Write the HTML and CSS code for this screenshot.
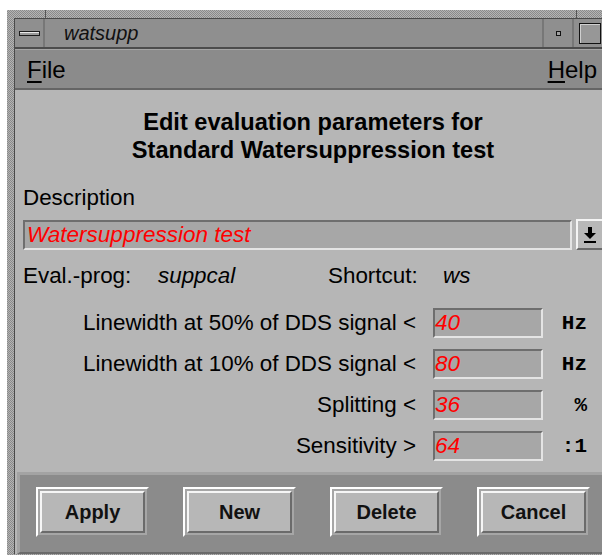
FILE: index.html
```html
<!DOCTYPE html>
<html lang="en">
<head>
<meta charset="utf-8">
<title>watsupp</title>
<link rel="stylesheet" href="styles.css">
</head>
<body>
<div class="window">
  <div class="frame-top">
    <span class="ft-left"></span>
    <span class="ft-mid"></span>
    <span class="ft-right"></span>
  </div>
  <div class="inner">
    <div class="titlebar">
      <div class="tb-menu"><span class="tb-bar"></span></div>
      <div class="tb-title">watsupp</div>
      <div class="tb-min"><span class="tb-dot"></span></div>
      <div class="tb-max"><span class="tb-square"></span></div>
    </div>

    <div class="menubar">
      <span class="menu-item"><u>F</u>ile</span>
      <span class="menu-item"><u>H</u>elp</span>
    </div>

    <div class="content">
      <h1 class="heading">Edit evaluation parameters for<br>Standard Watersuppression test</h1>

      <div class="label">Description</div>
      <div class="combo">
        <div class="field field-wide">Watersuppression test</div>
        <div class="arrow-btn">
          <svg width="14" height="20" viewBox="0 0 14 20">
            <rect x="5" y="2" width="4" height="7" fill="#000"/>
            <polygon points="1,8 13,8 7,14" fill="#000"/>
            <rect x="1" y="16" width="12" height="2" fill="#000"/>
          </svg>
        </div>
      </div>

      <div class="info-row">
        <span class="info-key key-prog">Eval.-prog:</span>
        <span class="info-val val-prog">suppcal</span>
        <span class="info-key key-short">Shortcut:</span>
        <span class="info-val">ws</span>
      </div>

      <div class="params">
        <span class="p-label">Linewidth at 50% of DDS signal &lt;</span>
        <div class="field field-num">40</div>
        <span class="p-unit">Hz</span>

        <span class="p-label">Linewidth at 10% of DDS signal &lt;</span>
        <div class="field field-num">80</div>
        <span class="p-unit">Hz</span>

        <span class="p-label">Splitting &lt;</span>
        <div class="field field-num">36</div>
        <span class="p-unit">%</span>

        <span class="p-label">Sensitivity &gt;</span>
        <div class="field field-num">64</div>
        <span class="p-unit">:1</span>
      </div>
    </div>

    <div class="actions">
      <div class="btn-ring"><button class="btn">Apply</button></div>
      <div class="btn-ring"><button class="btn">New</button></div>
      <div class="btn-ring"><button class="btn">Delete</button></div>
      <div class="btn-ring"><button class="btn">Cancel</button></div>
    </div>
  </div>
</div>
</body>
</html>
```

FILE: styles.css
```css
html, body {
  margin: 0;
  padding: 0;
  background: #ffffff;
  overflow: hidden;
  width: 602px;
  height: 555px;
}

body {
  font-family: "Liberation Sans", Arial, sans-serif;
  color: #000;
}

/* window frame with the stippled border */
.window {
  margin: 10px 0 0 7px;
  width: 604px;
  padding: 0 0 4px 0;
  background-color: #a2a2a2;
  background-image: repeating-conic-gradient(#8a8a8a 0 25%, #b4b4b4 0 50%);
  background-size: 2px 2px;
}

.frame-top {
  display: flex;
  height: 8px;
}

.ft-left {
  width: 38px;
  border-right: 1px solid #555;
}

.ft-mid {
  flex: 1;
  border-right: 1px solid #555;
}

.ft-right {
  width: 34px;
}

.inner {
  margin-left: 7px;
  border-left: 1px solid #4a4a4a;
  border-top: 1px solid #4a4a4a;
  background: #b6b6b6;
}

/* title bar */
.titlebar {
  display: flex;
  height: 28px;
  background: #8f8f8f;
  border-bottom: 2px solid #4c4c4c;
}

.tb-menu {
  width: 28px;
  display: flex;
  align-items: center;
  justify-content: center;
  border-right: 2px solid #777;
}

.tb-bar {
  width: 19px;
  height: 3px;
  background: #9a9a9a;
  border: 1px solid #1c1c1c;
  box-shadow: inset 0 1px 0 #e8e8e8;
}

.tb-title {
  flex: 1;
  padding-left: 19px;
  font-style: italic;
  font-size: 20px;
  line-height: 28px;
  color: #111;
}

.tb-min {
  width: 28px;
  border-left: 2px solid #777;
  display: flex;
  align-items: center;
  justify-content: center;
}

.tb-dot {
  width: 3px;
  height: 3px;
  border: 1px solid #111;
  background: #a0a0a0;
}

.tb-max {
  width: 32px;
  border-left: 2px solid #777;
  display: flex;
  align-items: center;
  padding-left: 5px;
}

.tb-square {
  width: 20px;
  height: 19px;
  border: 1px solid #111;
  background: #979797;
  box-shadow: inset 1px 1px 0 #cfcfcf;
}

/* menu bar */
.menubar {
  display: flex;
  justify-content: space-between;
  box-sizing: border-box;
  height: 41px;
  padding: 3px 14px 0 12px;
  background: #8b8b8b;
  border-top: 1px solid #a5a5a5;
  border-bottom: 2px solid #656565;
  font-size: 24px;
  line-height: 34px;
}

.menu-item u {
  text-decoration-thickness: 2px;
  text-underline-offset: 3px;
}

/* dialog body */
.content {
  padding: 18px 0 0 8px;
}

.heading {
  margin: 0 0 21px -8px;
  font-size: 23.6px;
  font-weight: bold;
  line-height: 28px;
  text-align: center;
}

.label {
  font-size: 22.4px;
  line-height: 26px;
  height: 26px;
}

.combo {
  display: flex;
  align-items: flex-start;
  gap: 4px;
  margin-top: 9px;
}

.field {
  box-sizing: border-box;
  background: #a7a7a7;
  border: 2px solid;
  border-color: #6e6e6e #e4e4e4 #e4e4e4 #6e6e6e;
  color: #ff0000;
  font-style: italic;
  font-size: 22.5px;
  white-space: nowrap;
}

.field-wide {
  width: 549px;
  height: 30px;
  line-height: 26px;
  padding-left: 2px;
}

.arrow-btn {
  box-sizing: border-box;
  width: 34px;
  height: 31px;
  margin-top: -1px;
  background: #b8b8b8;
  border: 2px solid;
  border-color: #f4f4f4 #6a6a6a #6a6a6a #f4f4f4;
  display: flex;
  align-items: center;
  padding-left: 5px;
}

.info-row {
  display: flex;
  margin-top: 13px;
  font-size: 22.4px;
  line-height: 26px;
}

.key-prog {
  width: 135px;
}

.val-prog {
  width: 170px;
}

.key-short {
  width: 115px;
}

.info-val {
  font-style: italic;
}

/* numeric parameters */
.params {
  display: grid;
  grid-template-columns: 1fr 110px 44px;
  row-gap: 11px;
  align-items: center;
  margin: 19px 24px 0 0;
}

.p-label {
  font-size: 22.4px;
  text-align: right;
  white-space: nowrap;
  margin-right: 17px;
}

.field-num {
  height: 30px;
  line-height: 26px;
  padding-left: 0;
}

.p-unit {
  font-family: "Liberation Mono", "Courier New", monospace;
  font-weight: bold;
  font-size: 21px;
  text-align: right;
}

/* button box */
.actions {
  display: flex;
  gap: 34px;
  margin: 11px 0 0 2px;
  padding: 12px 0 15px 16px;
  background: #8b8b8b;
  border-top: 3px solid #a3a3a3;
  border-left: 3px solid #a3a3a3;
  border-bottom: 2px solid #6a6a6a;
}

.btn-ring {
  padding: 2px;
  background: #a6a6a6;
  border: 2px solid;
  border-color: #ffffff #8b8b8b #8b8b8b #ffffff;
}

.btn {
  display: block;
  box-sizing: border-box;
  width: 105px;
  height: 42px;
  margin: 0;
  padding: 0;
  background: #b7b7b7;
  border: 2px solid;
  border-color: #f6f6f6 #6b6b6b #6b6b6b #f6f6f6;
  font-family: "Liberation Sans", Arial, sans-serif;
  font-weight: bold;
  font-size: 20px;
  color: #111;
}
```
